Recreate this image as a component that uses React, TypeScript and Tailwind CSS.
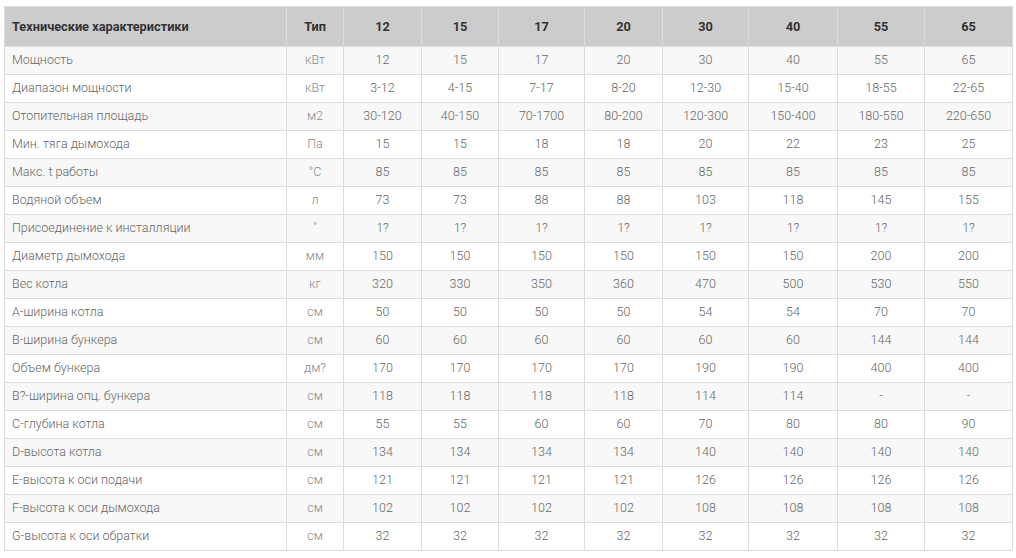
const header = ["12", "15", "17", "20", "30", "40", "55", "65"];

const rows: [string, string, string[]][] = [
  ["Мощность", "кВт", ["12", "15", "17", "20", "30", "40", "55", "65"]],
  ["Диапазон мощности", "кВт", ["3-12", "4-15", "7-17", "8-20", "12-30", "15-40", "18-55", "22-65"]],
  ["Отопительная площадь", "м2", ["30-120", "40-150", "70-1700", "80-200", "120-300", "150-400", "180-550", "220-650"]],
  ["Мин. тяга дымохода", "Па", ["15", "15", "18", "18", "20", "22", "23", "25"]],
  ["Макс. t работы", "°C", ["85", "85", "85", "85", "85", "85", "85", "85"]],
  ["Водяной объем", "л", ["73", "73", "88", "88", "103", "118", "145", "155"]],
  ["Присоединение к инсталляции", "\"", ["1?", "1?", "1?", "1?", "1?", "1?", "1?", "1?"]],
  ["Диаметр дымохода", "мм", ["150", "150", "150", "150", "150", "150", "200", "200"]],
  ["Вес котла", "кг", ["320", "330", "350", "360", "470", "500", "530", "550"]],
  ["A-ширина котла", "см", ["50", "50", "50", "50", "54", "54", "70", "70"]],
  ["B-ширина бункера", "см", ["60", "60", "60", "60", "60", "60", "144", "144"]],
  ["Объем бункера", "дм?", ["170", "170", "170", "170", "190", "190", "400", "400"]],
  ["B?-ширина опц. бункера", "см", ["118", "118", "118", "118", "114", "114", "-", "-"]],
  ["C-глубина котла", "см", ["55", "55", "60", "60", "70", "80", "80", "90"]],
  ["D-высота котла", "см", ["134", "134", "134", "134", "140", "140", "140", "140"]],
  ["E-высота к оси подачи", "см", ["121", "121", "121", "121", "126", "126", "126", "126"]],
  ["F-высота к оси дымохода", "см", ["102", "102", "102", "102", "108", "108", "108", "108"]],
  ["G-высота к оси обратки", "см", ["32", "32", "32", "32", "32", "32", "32", "32"]],
];

const widths = ["w-[282px]", "w-[57px]", "w-[78px]", "w-[77px]", "w-[86px]", "w-[78px]", "w-[86px]", "w-[89px]", "w-[87px]", "w-[88px]"];

export default function App() {
  return (
    <div className="min-h-screen bg-white pl-1 pt-[6px] font-['Roboto',sans-serif]">
      <table className="w-[1008px] table-fixed border-collapse">
        <colgroup>
          {widths.map((w, i) => (
            <col key={i} className={w} />
          ))}
        </colgroup>
        <thead>
          <tr className="h-[40px] bg-[#cccccc] text-[12.75px] text-[#333] font-bold">
            <th className="border border-[#dcdcdc] pl-[7px] text-left">Технические характеристики</th>
            <th className="border border-[#dcdcdc] text-center">Тип</th>
            {header.map((h) => (
              <th key={h} className="border border-[#dcdcdc] text-center">
                {h}
              </th>
            ))}
          </tr>
        </thead>
        <tbody className="text-[12.5px] font-light">
          {rows.map(([label, unit, vals], i) => (
            <tr key={label} className={`h-[28px] ${i % 2 === 0 ? "bg-[#f8f8f8]" : "bg-white"}`}>
              <td className="border border-[#dcdcdc] pl-[7px] text-left text-[#666]">{label}</td>
              <td className="border border-[#dcdcdc] text-center text-[#888]">{unit}</td>
              {vals.map((v, j) => (
                <td key={j} className="border border-[#dcdcdc] text-center text-[#666]">
                  {v}
                </td>
              ))}
            </tr>
          ))}
        </tbody>
      </table>
    </div>
  );
}
